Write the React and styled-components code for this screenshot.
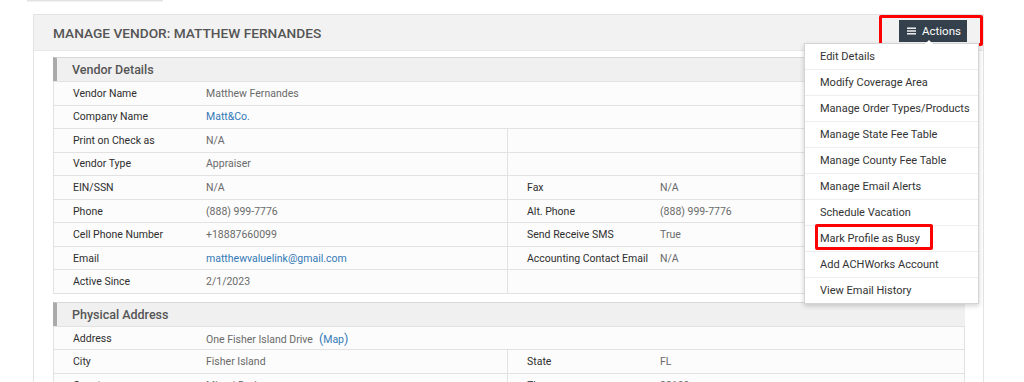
import React from "react";
import styled, { createGlobalStyle } from "styled-components";

const GlobalStyle = createGlobalStyle`
  body {
    margin: 0;
    background: #ffffff;
    font-family: Roboto, "Liberation Sans", Arial, sans-serif;
  }
`;

const TabEdge = styled.div`
  width: 136px;
  height: 1px;
  margin-left: 27px;
  background: #e2e2e2;
  box-shadow: 0 1px 1px rgba(0, 0, 0, 0.06);
`;

const Page = styled.div`
  padding: 13px 40px 0 33px;
`;

const Panel = styled.div`
  border: 1px solid #e3e3e3;
  background: #ffffff;
`;

const PanelHeader = styled.div`
  height: 35px;
  display: flex;
  align-items: center;
  justify-content: space-between;
  padding: 0 16px 0 19px;
  background: #f2f2f2;
  border-bottom: 1px solid #e8e8e8;
`;

const Title = styled.h1`
  margin: 0;
  font-size: 13.7px;
  font-weight: 500;
  color: #555555;
`;

const ActionsWrap = styled.div`
  position: relative;
  align-self: flex-start;
  margin-top: 5px;
`;

const ActionsButton = styled.button`
  display: flex;
  align-items: center;
  gap: 6px;
  height: 22px;
  width: 68px;
  padding: 0 0 0 8px;
  border: none;
  background: #34404b;
  color: #ffffff;
  font-family: inherit;
  font-size: 11.5px;
  cursor: pointer;
`;

const Highlight = styled.div`
  position: absolute;
  pointer-events: none;
  border: 3px solid #ff0000;
  border-radius: 2px;
  top: ${(p) => p.$top}px;
  left: ${(p) => p.$left}px;
  right: ${(p) => p.$right}px;
  bottom: ${(p) => p.$bottom}px;
`;

const Menu = styled.ul`
  position: absolute;
  top: 23px;
  left: -95px;
  width: 173px;
  margin: 0;
  padding: 0;
  list-style: none;
  background: #ffffff;
  border: 1px solid #d4d4d4;
  box-shadow: 0 2px 5px rgba(0, 0, 0, 0.18);
  z-index: 5;

  &::before {
    content: "";
    position: absolute;
    top: -4px;
    left: 120px;
    border-left: 4px solid transparent;
    border-right: 4px solid transparent;
    border-bottom: 4px solid #ffffff;
  }
`;

const MenuItem = styled.li`
  position: relative;
  height: 25px;
  line-height: 25px;
  padding-left: 15px;
  font-size: 11px;
  color: #333333;
  border-bottom: 1px solid #eeeeee;

  &:last-child {
    border-bottom: none;
  }
`;

const PanelBody = styled.div`
  padding: 6px 18px 0 19px;
`;

const Section = styled.div`
  margin-bottom: 8px;
`;

const SectionHeader = styled.div`
  height: 23px;
  line-height: 23px;
  padding-left: 15px;
  background: #f0f0f0;
  border-top: 1px solid #d8d8d8;
  border-left: 4px solid #aaaaaa;
  font-size: 12.5px;
  font-weight: 500;
  color: #555555;
`;

const Rows = styled.div`
  border-left: 1px solid #e2e2e2;
  border-right: 1px solid #e2e2e2;
`;

const Row = styled.div`
  display: flex;
  box-sizing: border-box;
  height: 23.56px;
  background: #fcfcfc;
  border-top: 1px solid #e2e2e2;
  &:last-child {
    height: 24.56px;
    border-bottom: 1px solid #e2e2e2;
  }
`;

const Half = styled.div`
  display: grid;
  grid-template-columns: 133px 1fr;
  align-items: center;
  padding-left: 19px;
  box-sizing: border-box;
  width: ${(p) => (p.$full ? "100%" : p.$left ? "454px" : "auto")};
  flex: ${(p) => (p.$left || p.$full ? "none" : "1")};
  border-right: ${(p) => (p.$left ? "1px solid #e2e2e2" : "none")};
`;

const Label = styled.span`
  font-size: 10.5px;
  font-weight: 400;
  color: #2e2e2e;
`;

const Value = styled.span`
  font-size: 10.5px;
  color: #6a6a6a;
`;

const Link = styled.a`
  color: #337ab7;
  text-decoration: none;
  font-size: 10.5px;
`;

const Paren = styled.span`
  margin-left: 6px;
  font-size: 12.5px;
  color: #337ab7;
`;

const MenuIcon = () => (
  <svg width="9" height="8" viewBox="0 0 9 8">
    <rect x="0" y="0.5" width="9" height="1.4" fill="#fff" />
    <rect x="0" y="3.3" width="9" height="1.4" fill="#fff" />
    <rect x="0" y="6.1" width="9" height="1.4" fill="#fff" />
  </svg>
);

const menuItems = [
  "Edit Details",
  "Modify Coverage Area",
  "Manage Order Types/Products",
  "Manage State Fee Table",
  "Manage County Fee Table",
  "Manage Email Alerts",
  "Schedule Vacation",
  "Mark Profile as Busy",
  "Add ACHWorks Account",
  "View Email History",
];

const Field = ({ label, children, ...rest }) => (
  <Half {...rest}>
    {label ? <Label>{label}</Label> : <span />}
    <Value>{children}</Value>
  </Half>
);

const Pair = ({ left, right }) => (
  <Row>
    <Field $left label={left && left[0]}>
      {left && left[1]}
    </Field>
    <Field label={right && right[0]}>{right && right[1]}</Field>
  </Row>
);

export default function App() {
  return (
    <>
      <GlobalStyle />
      <TabEdge />
      <Page>
        <Panel>
          <PanelHeader>
            <Title>MANAGE VENDOR: MATTHEW FERNANDES</Title>
            <ActionsWrap>
              <ActionsButton>
                <MenuIcon />
                Actions
              </ActionsButton>
              <Highlight $top={-5} $left={-20} $right={-16} $bottom={-4} />
              <Menu>
                {menuItems.map((item) => (
                  <MenuItem key={item}>
                    {item}
                    {item === "Mark Profile as Busy" && (
                      <Highlight $top={-2} $left={10} $right={45} $bottom={1} />
                    )}
                  </MenuItem>
                ))}
              </Menu>
            </ActionsWrap>
          </PanelHeader>
          <PanelBody>
            <Section>
              <SectionHeader>Vendor Details</SectionHeader>
              <Rows>
                <Row>
                  <Field $full label="Vendor Name">Matthew Fernandes</Field>
                </Row>
                <Row>
                  <Field $full label="Company Name">
                    <Link href="#">Matt&amp;Co.</Link>
                  </Field>
                </Row>
                <Pair left={["Print on Check as", "N/A"]} />
                <Pair left={["Vendor Type", "Appraiser"]} />
                <Pair left={["EIN/SSN", "N/A"]} right={["Fax", "N/A"]} />
                <Pair
                  left={["Phone", "(888) 999-7776"]}
                  right={["Alt. Phone", "(888) 999-7776"]}
                />
                <Pair
                  left={["Cell Phone Number", "+18887660099"]}
                  right={["Send Receive SMS", "True"]}
                />
                <Pair
                  left={[
                    "Email",
                    <Link href="#">matthewvaluelink@gmail.com</Link>,
                  ]}
                  right={["Accounting Contact Email", "N/A"]}
                />
                <Pair left={["Active Since", "2/1/2023"]} />
              </Rows>
            </Section>
            <Section>
              <SectionHeader>Physical Address</SectionHeader>
              <Rows>
                <Row>
                  <Field $full label="Address">
                    One Fisher Island Drive
                    <Paren>
                      (<Link href="#">Map</Link>)
                    </Paren>
                  </Field>
                </Row>
                <Pair left={["City", "Fisher Island"]} right={["State", "FL"]} />
                <Pair left={["County", "Miami-Dade"]} right={["Zip", "33109"]} />
              </Rows>
            </Section>
          </PanelBody>
        </Panel>
      </Page>
    </>
  );
}
